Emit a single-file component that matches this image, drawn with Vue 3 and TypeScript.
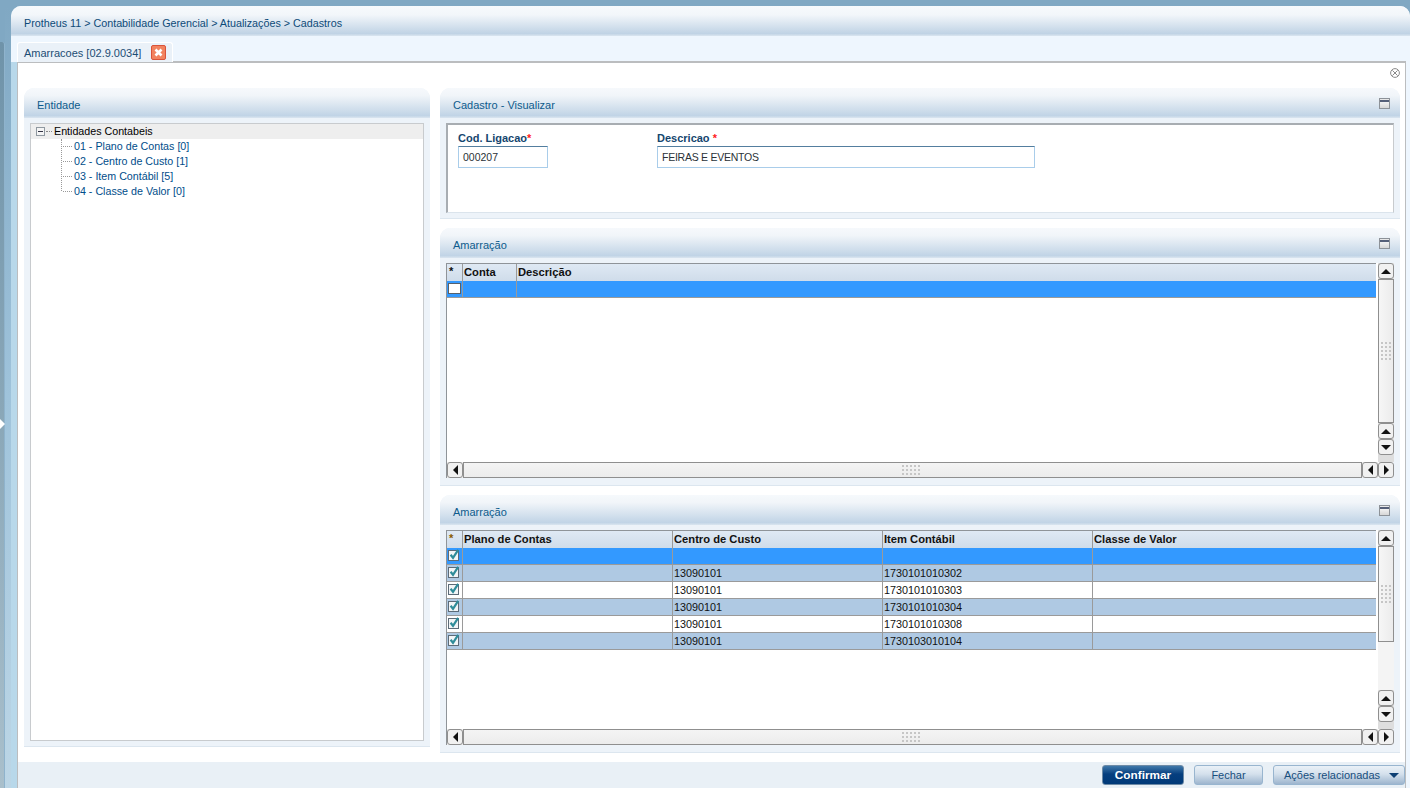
<script setup lang="ts">
interface GridCol { title: string; cls: string }
interface GridRow { cells: string[]; tone: string; checked: boolean }
interface GridDef { cols: GridCol[]; rows: GridRow[]; thumb: boolean }

const treeItems: string[] = [
  '01 - Plano de Contas [0]',
  '02 - Centro de Custo [1]',
  '03 - Item Contábil [5]',
  '04 - Classe de Valor [0]',
]

const first: GridDef = {
  thumb: false,
  cols: [
    { title: 'Conta', cls: 'w54' },
    { title: 'Descrição', cls: 'grow' },
  ],
  rows: [{ cells: ['', ''], tone: 'sel', checked: false }],
}

const second: GridDef = {
  thumb: true,
  cols: [
    { title: 'Plano de Contas', cls: 'w210' },
    { title: 'Centro de Custo', cls: 'w210' },
    { title: 'Item Contábil', cls: 'w210' },
    { title: 'Classe de Valor', cls: 'grow' },
  ],
  rows: [
    { cells: ['', '', '', ''], tone: 'sel', checked: true },
    { cells: ['', '13090101', '1730101010302', ''], tone: 'alt', checked: true },
    { cells: ['', '13090101', '1730101010303', ''], tone: 'plain', checked: true },
    { cells: ['', '13090101', '1730101010304', ''], tone: 'alt', checked: true },
    { cells: ['', '13090101', '1730101010308', ''], tone: 'plain', checked: true },
    { cells: ['', '13090101', '1730103010104', ''], tone: 'alt', checked: true },
  ],
}

const grips: number[] = Array.from({ length: 15 }, (_, i) => i)
const grids: GridDef[] = [first, second]
</script>

<template>
  <div class="app">
    <div class="rail">
      <div class="rail-a"><span class="rail-arrow"></span></div>
      <div class="rail-b"></div>
    </div>
    <div class="window">
      <div class="crumb">Protheus 11 &gt; Contabilidade Gerencial &gt; Atualizações &gt; Cadastros</div>
      <div class="tabbar">
        <div class="tab">
          <span>Amarracoes [02.9.0034]</span>
          <span class="tab-x">
            <svg width="13" height="13" viewBox="0 0 13 13"><path d="M3.5 3.5l6 6M9.5 3.5l-6 6" stroke="#fff" stroke-width="2.6" /></svg>
          </span>
        </div>
      </div>
      <div class="stage">
        <div class="sheet">
          <div class="tools">
            <svg width="10" height="10" viewBox="0 0 10 10" fill="none" stroke="#8a8a8a" stroke-width="1">
              <circle cx="5" cy="5" r="4.4" /><path d="M2.4 2.4l5.2 5.2M7.6 2.4l-5.2 5.2" />
            </svg>
          </div>
          <div class="columns">
            <section class="panel left">
              <header class="phead"><span>Entidade</span></header>
              <div class="pbody tree-wrap">
                <div class="tree">
                  <div class="tree-root">
                    <span class="minus"></span><span class="dots"></span>
                    <span class="root-label">Entidades Contabeis</span>
                  </div>
                  <ul class="tree-list">
                    <li v-for="item in treeItems" :key="item">{{ item }}</li>
                  </ul>
                </div>
              </div>
            </section>

            <div class="right">
              <section class="panel form-panel">
                <header class="phead">
                  <span>Cadastro - Visualizar</span>
                  <span class="mini"></span>
                </header>
                <div class="pbody form-wrap">
                  <div class="form">
                    <label class="field f1">
                      <span class="lbl">Cod. Ligacao<em>*</em></span>
                      <span class="inp">000207</span>
                    </label>
                    <label class="field f2">
                      <span class="lbl">Descricao <em>*</em></span>
                      <span class="inp tight">FEIRAS E EVENTOS</span>
                    </label>
                  </div>
                </div>
              </section>

              <section v-for="(g, gi) in grids" :key="gi" class="panel grid-panel">
                <header class="phead">
                  <span>Amarração</span>
                  <span class="mini"></span>
                </header>
                <div class="pbody grid-wrap">
                  <div class="gridbox">
                    <div class="table">
                      <div class="tr th">
                        <div class="td chk"><b :class="{ star: g.thumb }">*</b></div>
                        <div v-for="c in g.cols" :key="c.title" class="td" :class="c.cls">{{ c.title }}</div>
                      </div>
                      <div v-for="(r, ri) in g.rows" :key="ri" class="tr" :class="r.tone">
                        <div class="td chk">
                          <svg v-if="r.checked" width="14" height="14" viewBox="0 0 14 14">
                            <rect x="1.5" y="2.5" width="10" height="10" fill="#f2f5f7" stroke="#5c6b78" />
                            <path d="M3.6 6.8l2.4 3 5.2-8" fill="none" stroke="#2f8c9a" stroke-width="2.2" />
                          </svg>
                          <span v-else class="box"></span>
                        </div>
                        <div v-for="(cell, ci) in r.cells" :key="ci" class="td" :class="g.cols[ci].cls">{{ cell }}</div>
                      </div>
                    </div>

                    <div class="vbar">
                      <button class="sb"><i class="tri up"></i></button>
                      <div class="vtrack" :class="{ short: g.thumb }">
                        <span class="grip">
                          <i v-for="n in grips" :key="n"></i>
                        </span>
                      </div>
                      <div v-if="g.thumb" class="hatch"></div>
                      <button class="sb"><i class="tri up"></i></button>
                      <button class="sb"><i class="tri down"></i></button>
                      <div class="vgap"></div>
                    </div>

                    <div class="hbar">
                      <button class="sb"><i class="tri lf"></i></button>
                      <div class="htrack">
                        <span class="grip horiz">
                          <i v-for="n in grips" :key="n"></i>
                        </span>
                      </div>
                      <button class="sb"><i class="tri lf"></i></button>
                    </div>
                    <button class="sb corner"><i class="tri rt"></i></button>
                  </div>
                </div>
              </section>
            </div>
          </div>
        </div>
        <footer class="actions">
          <button class="btn primary">Confirmar</button>
          <button class="btn fechar">Fechar</button>
          <button class="btn more">Ações relacionadas <i class="caret"></i></button>
        </footer>
      </div>
    </div>
  </div>
</template>

<style>
html, body { margin: 0; padding: 0; overflow: hidden; }
</style>

<style scoped>
* { box-sizing: border-box; }
.app {
  width: 1410px; height: 788px; overflow: hidden; display: flex; padding-top: 6px;
  background: #80a8c3; font: 10.8px "Liberation Sans", Arial, sans-serif; color: #1c1c1c;
}
.rail { width: 11px; display: flex; flex: none; }
.rail-a {
  width: 5px; margin-top: 36px; position: relative; border-radius: 0 3px 0 0;
  border-right: 1px solid #8fb3cc; background: linear-gradient(#6f93a9, #8aa7b8 50%, #a9bfcb);
}
.rail-b { width: 6px; background: linear-gradient(#80a8c3, #9fc3db 50%, #bcd6e6); }
.rail-arrow {
  position: absolute; left: 0; top: 377px; width: 0; height: 0;
  border-left: 5px solid #fff; border-top: 5px solid transparent; border-bottom: 5px solid transparent;
}
.window {
  flex: 1; display: flex; flex-direction: column; min-width: 0;
  border-radius: 10px 10px 0 0; overflow: hidden;
  background: linear-gradient(90deg, #b8d8ea 6px, #eef6fe 6px);
}
.crumb {
  height: 30px; flex: none; padding: 4px 0 0 13px; display: flex; align-items: center;
  background: linear-gradient(#f7fafc, #f2f6fa 30%, #c0d3e5 92%, #dbe6f0);
  color: #0d4a78; font-size: 10.75px;
}
.tabbar { height: 26px; flex: none; padding: 6px 0 0 6px; display: flex; background: #eef6fe; }
.tab {
  width: 156px; height: 20px; background: #eaf1f8; border: 1px solid #fff; border-bottom: none;
  border-radius: 3px 3px 0 0; display: flex; align-items: center; padding-left: 6px; gap: 10px;
  color: #1c4d74; position: relative; z-index: 1; font-size: 11px;
}
.tab-x {
  width: 15px; height: 15px; background: #f2835f; border: 1px solid #d9533a;
  border-radius: 2px; display: flex; align-items: center; justify-content: center;
}
.stage {
  flex: 1; min-height: 0; display: flex; flex-direction: column; margin: -1px 4px 0 6px;
  border-top: 2px solid #bbbdbf; border-left: 1px solid #bbbdbf; border-right: 1px solid #bbbdbf;
}
.sheet { flex: 1; background: #fff; min-height: 0; padding: 0 5px 0 6px; }
.tools { height: 25px; display: flex; justify-content: flex-end; align-items: flex-start; padding: 5px 0 0 0; }
.columns { display: flex; gap: 10px; height: 664px; }
.panel { background: #edf3f9; border-radius: 10px 10px 0 0; display: flex; flex-direction: column; box-shadow: 0 1px 0 #dce6ef; }
.left { width: 406px; height: 658px; }
.right { width: 960px; display: flex; flex-direction: column; gap: 10px; }
.phead {
  height: 30px; flex: none; display: flex; align-items: center; justify-content: space-between;
  padding: 4px 10px 0 13px; border-radius: 10px 10px 0 0;
  background: linear-gradient(#f6f9fc, #f1f5f9 25%, #c1d4e6 92%, #dbe6f0);
  color: #0d5b8c; font-size: 11px;
}
.mini {
  width: 11px; height: 11px; border: 1px solid #8d9298; margin-top: -4px;
  background: linear-gradient(#e8e8e8 0 1px, #555f78 1px 3px, #f2f2f2 3px, #d6d6d6);
}
.pbody { flex: 1; min-height: 0; }
.tree-wrap { padding: 5px 6px; }
.tree { height: 100%; background: #fff; border: 1px solid #c8cbce; border-width: 2px 1px 1px 1px; }
.tree-root { height: 15px; background: #eeeeee; display: flex; align-items: center; padding-left: 5px; color: #000; margin-top: -1px; }
.root-label { margin-top: -1px; font-size: 10.7px; }
.minus { width: 9px; height: 9px; border: 1px solid #8f98a0; position: relative; background: #f4f4f4; }
.minus::after { content: ""; position: absolute; left: 1px; right: 1px; top: 3px; height: 1px; background: #334; }
.dots { width: 6px; border-top: 1px dotted #888; margin: 0 2px 0 1px; }
.tree-list { list-style: none; margin: 0 0 0 30px; padding: 0; border-left: 1px dotted #999; height: 52px; overflow: visible; font-size: 10.7px; }
.tree-list li {
  height: 15px; line-height: 15px; color: #004d8a; padding-left: 12px; position: relative; white-space: nowrap;
}
.tree-list li::before { content: ""; position: absolute; left: 1px; width: 9px; top: 7px; border-top: 1px dotted #999; }
.form-panel { height: 130px; flex: none; }
.form-wrap { padding: 5px 6px; }
.form {
  height: 90px; background: #fff; border-style: solid; border-width: 2px 1px 1px 2px; border-color: #a8adb2 #c8cbce #dbe4ec #a8adb2;
  display: flex; padding: 6px 0 0 10px;
}
.field { display: flex; flex-direction: column; }
.f1 { width: 199px; }
.f2 { width: 378px; }
.lbl { font-weight: bold; font-size: 11px; color: #15466e; height: 15px; line-height: 14px; }
.lbl em { color: #f22; font-style: normal; }
.inp {
  height: 22px; line-height: 21px; padding-left: 4px; color: #2a3238; background: #fff; font-size: 10.5px;
  border: 1px solid #a9cdea; border-top-color: #537e9f;
}
.tight { letter-spacing: -0.25px; }
.f1 .inp { width: 90px; }
.grid-panel { height: 257px; flex: none; }
.grid-wrap { padding: 5px 7px 7px 6px; }
.gridbox {
  height: 215px; display: grid; grid-template-columns: 931px 16px; grid-template-rows: 199px 16px;
  background: #fff; border-left: 1px solid #8f9499; position: relative;
}
.table { min-width: 0; overflow: hidden; border-top: 1px solid #8f9499; margin-right: 2px; }
.tr { height: 17px; display: flex; border-bottom: 1px solid #9a9a9a; background: #fff; font-size: 10.8px; color: #111; }
.tr.th { height: 17px; background: linear-gradient(#dfe9f4, #cfdcea); font-weight: bold; font-size: 11.2px; color: #111; border-bottom: none; }
.tr.sel { background: #3399ff; }
.tr.alt { background: #afc9e3; }
.td { height: 100%; border-right: 1px solid #9a9a9a; padding: 2px 0 0 1px; overflow: hidden; white-space: nowrap; line-height: 13px; }
.th .chk { padding-left: 0; }
.chk { width: 16px; flex: none; padding: 0; display: flex; align-items: flex-start; }
.chk b { padding: 1px 0 0 2px; }
.chk b.star { color: #8a5a00; }
.chk svg { display: block; margin-top: 0; }
.box { width: 13px; height: 11px; margin: 2px 0 0 1px; background: #fff; border: 1px solid #55606c; display: block; }
.w54 { width: 54px; flex: none; }
.w210 { width: 210px; flex: none; }
.grow { flex: 1; border-right: none; }
.vbar { display: flex; flex-direction: column; background: #e2e2e2; }
.sb {
  width: 16px; height: 16px; padding: 0; flex: none; border: 1.5px solid #8f8f8f; border-radius: 3px; background: #f1f1f1;
  display: flex; align-items: center; justify-content: center;
}
.vtrack, .htrack {
  flex: 1; background: linear-gradient(90deg, #f6f6f6, #ececec); border: 1.5px solid #8f8f8f;
  display: flex; align-items: center; justify-content: center;
}
.htrack { background: linear-gradient(#f4f4f4, #ececec); padding-right: 3px; }
.vtrack.short { flex: none; height: 96px; }
.hatch {
  height: 48px; flex: none; background-color: #f4f4f4;
  background-image: radial-gradient(#d4d4d4 0.5px, transparent 0.7px); background-size: 2px 2px;
}
.vgap { height: 7px; flex: none; background: #dedede; }
.hbar { display: flex; background: #eee; }
.hbar .sb { flex: none; }
.corner { align-self: stretch; }
.grip { display: grid; grid-template-columns: repeat(3, 2px); gap: 2px; }
.grip.horiz { grid-template-columns: repeat(5, 2px); }
.grip i { display: block; width: 2px; height: 2px; background: #c6c6c6; }
.tri { width: 0; height: 0; display: block; }
.tri.up { border-left: 5px solid transparent; border-right: 5px solid transparent; border-bottom: 5px solid #111; }
.tri.down { border-left: 5px solid transparent; border-right: 5px solid transparent; border-top: 5px solid #111; }
.tri.lf { border-top: 5px solid transparent; border-bottom: 5px solid transparent; border-right: 5px solid #111; }
.tri.rt { border-top: 5px solid transparent; border-bottom: 5px solid transparent; border-left: 5px solid #111; }
.actions {
  height: 26px; flex: none; background: #e9f0f6; display: flex; align-items: center; justify-content: flex-end; gap: 10px;
}
.btn {
  height: 20px; padding: 0; font: 11px "Liberation Sans", Arial, sans-serif; border-radius: 3px; border: 1px solid #98b5cf;
  background: linear-gradient(#eaf1f7, #d4e0ec 45%, #9db5ce); color: #174e7d;
}
.primary {
  width: 82px; border-color: #6d8aa6; background: linear-gradient(#3f78aa, #063f7f 45%, #003a78);
  color: #fff; font-weight: bold; font-size: 11.8px;
}
.fechar { width: 69px; }
.more { width: 132px; display: flex; align-items: center; justify-content: space-between; padding: 0 5px 0 10px; }
.caret { width: 0; height: 0; border-left: 5px solid transparent; border-right: 5px solid transparent; border-top: 5px solid #0d3f73; }
</style>
